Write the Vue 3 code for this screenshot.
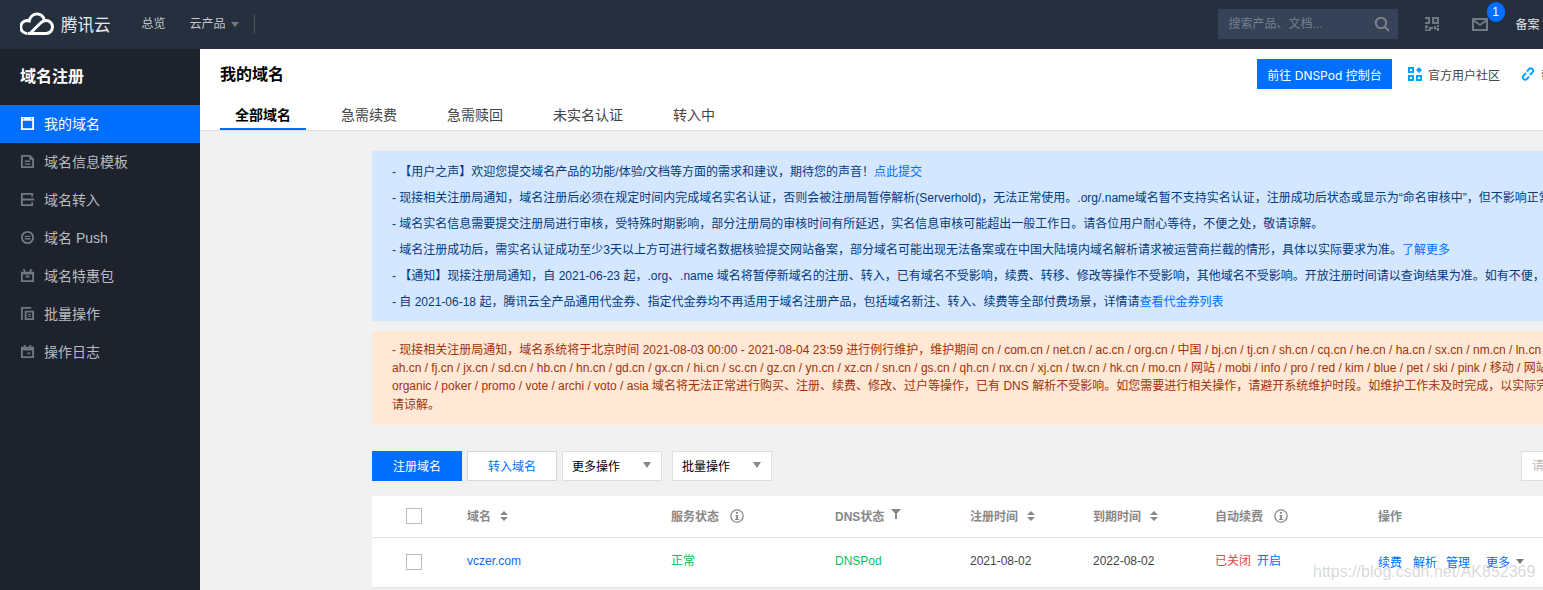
<script setup>
const menu = [
  { name: '我的域名', active: true, d: 'M1 1h14v14H1zM3 5v8h10V5zM3 2.500v1h1.500v-1zM11.500 2.500v1H13v-1z' },
  { name: '域名信息模板', d: 'M1 1h10l4 4v10H1zM3 3v10h10V6h-3V3zM5 7h6v1.500H5zM5 10h6v1.500H5z' },
  { name: '域名转入', d: 'M1 1h13v4h-2V3H3v4h12v2H3v4h9v-2h2v4H1z' },
  { name: '域名 Push', d: 'M8 1a7 7 0 1 0 0 14A7 7 0 0 0 8 1zM8 3a5 5 0 1 1 0 10A5 5 0 0 1 8 3zM5 6h6v1.500H5zM5 8.500h6V10H5z' },
  { name: '域名特惠包', d: 'M1 4h3L3 1h2l1 3h4l1-3h2l-1 3h3v11H1zM3 7v6h10V7zM6 8h4v2H6z' },
  { name: '批量操作', d: 'M1 1h11v2H3v12H1zM5 5h10v10H5zM7 7v6h6V7zM8.500 8.500h3v1h-3zM8.500 10.500h3v1h-3z' },
  { name: '操作日志', d: 'M4 1h2v2h4V1h2v2h3v12H1V3h3zM3 7v6h10V7zM8 9h3v2H8z' },
]

const tabs = ['全部域名', '急需续费', '急需赎回', '未实名认证', '转入中']

const orangeLines = [
  '- 现接相关注册局通知，域名系统将于北京时间 2021-08-03 00:00 - 2021-08-04 23:59 进行例行维护，维护期间 cn / com.cn / net.cn / ac.cn / org.cn / 中国 / bj.cn / tj.cn / sh.cn / cq.cn / he.cn / ha.cn / sx.cn / nm.cn / ln.cn /',
  'ah.cn / fj.cn / jx.cn / sd.cn / hb.cn / hn.cn / gd.cn / gx.cn / hi.cn / sc.cn / gz.cn / yn.cn / xz.cn / sn.cn / gs.cn / qh.cn / nx.cn / xj.cn / tw.cn / hk.cn / mo.cn / 网站 / mobi / info / pro / red / kim / blue / pet / ski / pink / 移动 / 网站',
  'organic / poker / promo / vote / archi / voto / asia 域名将无法正常进行购买、注册、续费、修改、过户等操作，已有 DNS 解析不受影响。如您需要进行相关操作，请避开系统维护时段。如维护工作未及时完成，以实际完成时间为准',
  '请谅解。',
]
</script>

<template>
  <div class="page">
    <header class="topbar">
      <svg class="logo" viewBox="0 0 34 24" width="34" height="24">
        <path d="M8 21.500h18a6.500 6.500 0 0 0 0-13c-3 0-4.500 1.500-6.500 3.500L10.500 21M7.500 21.500a6.500 6.500 0 0 1-.5-13c.8 0 1.500.1 2.200.4C10 5 13 2 17 2c3.600 0 6.500 2.500 7.500 6.500" fill="none" stroke="#fff" stroke-width="3" />
      </svg>
      <span class="brand">腾讯云</span>
      <span class="nav nav-first">总览</span>
      <span class="nav nav-second">云产品</span>
      <i class="caret"></i>
      <i class="divider"></i>
      <div class="search">
        <span>搜索产品、文档...</span>
        <svg viewBox="0 0 16 16" width="16" height="16">
          <circle cx="7" cy="7" r="5.200" fill="none" stroke="#7b8089" stroke-width="2" />
          <path d="M11 11l4 4" stroke="#7b8089" stroke-width="2" />
        </svg>
      </div>
      <svg class="qr" viewBox="0 0 16 16" width="16" height="16">
        <path d="M1 1h5v7H1V6h3V3H1zM8 1h7v7H8zM10 3v3h3V3zM11 4h1v1h-1zM1 9.500h3v2H3v1H1zM5 11h4v2H7v2H1v-1.500h4zM10 10h2v2h3v3h-2v-1.500h-3zM13 9h2v2h-2z" fill="#6f7883" fill-rule="evenodd" />
      </svg>
      <div class="mail">
        <svg viewBox="0 0 16 13" width="16" height="13">
          <path d="M0 0h16v13H0zM2 4v7h12V4L8 8zM3 2l5 4 5-4z" fill="#6f7883" fill-rule="evenodd" />
        </svg>
        <b class="badge">1</b>
      </div>
      <span class="record">备案</span>
    </header>

    <div class="body">
      <aside class="sidebar">
        <h2>域名注册</h2>
        <a v-for="item in menu" :key="item.name" class="menu-item" :class="{ active: item.active }">
          <svg viewBox="0 0 16 16" width="15" height="15">
            <path :d="item.d" fill="currentColor" fill-rule="evenodd" />
          </svg>
          <span>{{ item.name }}</span>
        </a>
      </aside>

      <main class="main">
        <section class="head">
          <div class="head-row">
            <h1>我的域名</h1>
            <button class="go-btn">前往 DNSPod 控制台</button>
            <svg class="head-icon" viewBox="0 0 14 14" width="14" height="14">
              <path d="M0 0h6v6H0zM2 2v2h2V2zM0 8h6v6H0zM2 10v2h2v-2zM8 8h6v6H8zM10 10v2h2v-2zM11 0l3 3-3 3-3-3z" fill="#00a4ff" fill-rule="evenodd" />
            </svg>
            <span class="head-link">官方用户社区</span>
            <svg class="head-icon chain" viewBox="0 0 14 14" width="14" height="14">
              <path d="M6 4.500l2-2.300a2.200 2.200 0 0 1 3.600 3L9 8M8 9.500l-2 2.300a2.200 2.200 0 0 1-3.600-3L5 6" fill="none" stroke="#00a4ff" stroke-width="2" />
            </svg>
            <span class="head-link">帮助</span>
          </div>
          <nav class="tabs">
            <span v-for="(tab, i) in tabs" :key="tab" class="tab" :class="{ current: i === 0 }">{{ tab }}</span>
          </nav>
        </section>

        <section class="content">
          <div class="notice blue">
            <p>- 【用户之声】欢迎您提交域名产品的功能/体验/文档等方面的需求和建议，期待您的声音！<a>点此提交</a></p>
            <p>- 现接相关注册局通知，域名注册后必须在规定时间内完成域名实名认证，否则会被注册局暂停解析(Serverhold)，无法正常使用。.org/.name域名暂不支持实名认证，注册成功后状态或显示为“命名审核中”，但不影响正常使用</p>
            <p>- 域名实名信息需要提交注册局进行审核，受特殊时期影响，部分注册局的审核时间有所延迟，实名信息审核可能超出一般工作日。请各位用户耐心等待，不便之处，敬请谅解。</p>
            <p>- 域名注册成功后，需实名认证成功至少3天以上方可进行域名数据核验提交网站备案，部分域名可能出现无法备案或在中国大陆境内域名解析请求被运营商拦截的情形，具体以实际要求为准。<a>了解更多</a></p>
            <p>- 【通知】现接注册局通知，自 2021-06-23 起，.org、.name 域名将暂停新域名的注册、转入，已有域名不受影响，续费、转移、修改等操作不受影响，其他域名不受影响。开放注册时间请以查询结果为准。如有不便，敬请谅解</p>
            <p>- 自 2021-06-18 起，腾讯云全产品通用代金券、指定代金券均不再适用于域名注册产品，包括域名新注、转入、续费等全部付费场景，详情请<a>查看代金券列表</a></p>
          </div>

          <div class="notice orange">
            <p v-for="line in orangeLines" :key="line">{{ line }}</p>
          </div>

          <div class="toolbar">
            <button class="btn primary">注册域名</button>
            <button class="btn plain">转入域名</button>
            <div class="select">更多操作<i></i></div>
            <div class="select">批量操作<i></i></div>
            <div class="find">请输入要搜索的域名</div>
          </div>

          <div class="table">
            <div class="row thead">
              <div class="cell check"><i class="box"></i></div>
              <div class="cell">域名<i class="sort"></i></div>
              <div class="cell">服务状态
                <svg class="tip" viewBox="0 0 14 14" width="14" height="14">
                  <circle cx="7" cy="7" r="6.200" fill="none" stroke="#888" stroke-width="1.300" />
                  <path d="M6 3h2v1.800H6zM5.500 6H8v4h1v1H5v-1h1.200V7h-.7z" fill="#888" />
                </svg>
              </div>
              <div class="cell">DNS状态
                <svg class="funnel" viewBox="0 0 10 10" width="10" height="10">
                  <path d="M0 0h10L6 4.500V10H4V4.500z" fill="#888" />
                </svg>
              </div>
              <div class="cell">注册时间<i class="sort"></i></div>
              <div class="cell">到期时间<i class="sort"></i></div>
              <div class="cell">自动续费
                <svg class="tip" viewBox="0 0 14 14" width="14" height="14">
                  <circle cx="7" cy="7" r="6.200" fill="none" stroke="#888" stroke-width="1.300" />
                  <path d="M6 3h2v1.800H6zM5.500 6H8v4h1v1H5v-1h1.200V7h-.7z" fill="#888" />
                </svg>
              </div>
              <div class="cell">操作</div>
            </div>
            <div class="row tbody">
              <div class="cell check"><i class="box"></i></div>
              <div class="cell"><a>vczer.com</a></div>
              <div class="cell green raised">正常</div>
              <div class="cell green">DNSPod</div>
              <div class="cell">2021-08-02</div>
              <div class="cell">2022-08-02</div>
              <div class="cell raised"><span class="red">已关闭</span><a class="open">开启</a></div>
              <div class="cell ops">
                <a>续费</a><a class="parse">解析</a><a class="manage">管理</a><a class="more">更多</a><i class="caret-sm"></i>
              </div>
            </div>
          </div>
        </section>
      </main>
    </div>
    <span class="watermark">https://blog.csdn.net/AK852369</span>
  </div>
</template>

<style>
html,
body {
  margin: 0;
  overflow: hidden;
}
</style>

<style scoped>
.page {
  position: relative;
  width: 1543px;
  height: 590px;
  overflow: hidden;
  display: flex;
  flex-direction: column;
  background: #f1f1f1;
  font-family: "Liberation Sans", "Noto Sans CJK SC", sans-serif;
  font-size: 12px;
  color: #333;
}

.topbar {
  flex: none;
  height: 49px;
  box-sizing: border-box;
  display: flex;
  align-items: center;
  padding: 0 0 1px 20px;
  background: #262f3e;
  color: #c1c6c8;
}

.logo {
  flex: none;
  margin-top: -1px;
}

.brand {
  margin-left: 7px;
  padding-bottom: 1px;
  font-size: 16.500px;
  color: #e8eaed;
}

.nav {
  padding-bottom: 3px;
}

.nav-first {
  margin-left: 31px;
}

.nav-second {
  margin-left: 24px;
}

.caret {
  margin-left: 5px;
  border: 4px solid transparent;
  border-top: 5px solid #777;
  border-bottom: 0;
}

.divider {
  margin-left: 15px;
  width: 1px;
  height: 20px;
  background: #4b5361;
}

.search {
  margin-left: 963px;
  flex: none;
  width: 180px;
  height: 30px;
  box-sizing: border-box;
  padding: 0 8px 0 11px;
  display: flex;
  align-items: center;
  justify-content: space-between;
  background: #354258;
  color: #777f8a;
}

.search span {
  padding-bottom: 3px;
}

.qr {
  margin-left: 26px;
  flex: none;
}

.mail {
  position: relative;
  margin-left: 32px;
  display: flex;
  flex: none;
}

.badge {
  position: absolute;
  left: 15px;
  top: -16px;
  width: 18px;
  height: 20px;
  border-radius: 9px;
  background: #006eff;
  color: #fff;
  font-weight: 400;
  text-align: center;
  line-height: 20px;
}

.record {
  margin-left: 28px;
  padding-bottom: 1px;
  flex: none;
  color: #e0e3e6;
}

.body {
  flex: 1;
  display: flex;
  min-height: 0;
}

.sidebar {
  flex: none;
  width: 200px;
  background: #1e222d;
}

.sidebar h2 {
  margin: 0;
  height: 56px;
  padding-left: 20px;
  line-height: 56px;
  font-size: 16px;
  font-weight: 700;
  color: #fff;
}

.menu-item {
  height: 38px;
  box-sizing: border-box;
  padding: 0 0 2px 20px;
  display: flex;
  align-items: center;
  gap: 9px;
  font-size: 14px;
  color: #b8bcc2;
}

.menu-item svg {
  color: #6f7883;
}

.menu-item.active {
  background: #006eff;
  color: #fff;
}

.menu-item.active svg {
  color: #fff;
}

.main {
  flex: 1;
  min-width: 0;
  overflow: hidden;
}

.head {
  height: 82px;
  box-sizing: border-box;
  padding: 10px 0 0 20px;
  background: #fff;
  border-bottom: 1px solid #ddd;
}

.head-row {
  height: 30px;
  display: flex;
  align-items: center;
  white-space: nowrap;
}

.head-row h1 {
  margin: 0;
  padding-bottom: 2px;
  width: 1037px;
  flex: none;
  font-size: 16px;
  font-weight: 700;
  color: #000;
}

.go-btn {
  flex: none;
  width: 135px;
  height: 30px;
  padding: 0;
  border: 0;
  background: #006eff;
  color: #fff;
  font: inherit;
  font-family: "Inter", "Noto Sans CJK SC", sans-serif;
}

.head-icon {
  margin-left: 16px;
  flex: none;
}

.head-icon.chain {
  margin-left: 21px;
}

.head-link {
  margin-left: 6px;
  flex: none;
  color: #444;
}

.tabs {
  margin-top: 11px;
  display: flex;
  gap: 20px;
}

.tab {
  height: 30px;
  padding: 0 15px;
  box-sizing: border-box;
  line-height: 30px;
  font-size: 14px;
  color: #444;
}

.tab.current {
  font-weight: 700;
  color: #000;
  border-bottom: 2px solid #006eff;
}

.content {
  width: 1400px;
  margin-left: 172px;
  padding-top: 20px;
}

.notice {
  padding-left: 20px;
  white-space: nowrap;
  overflow: hidden;
}

.notice p {
  margin: 0;
}

.notice a {
  color: #006eff;
}

.blue {
  padding-top: 8px;
  padding-bottom: 6px;
  background: #d5e7ff;
  color: #003b80;
  line-height: 26px;
}

.orange {
  margin-top: 10px;
  padding-top: 10px;
  padding-bottom: 11px;
  background: #ffe8d5;
  color: #a2330c;
  line-height: 18px;
}

.orange p:last-child {
  margin-top: 1px;
}

.toolbar {
  margin-top: 26px;
  display: flex;
  gap: 5px;
}

.btn {
  flex: none;
  width: 90px;
  height: 30px;
  padding: 0 0 2px;
  box-sizing: border-box;
  border: 1px solid #d3d9e3;
  font: inherit;
}

.btn.primary {
  background: #006eff;
  border-color: #006eff;
  color: #fff;
}

.btn.plain {
  background: #fff;
  color: #006eff;
}

.select {
  flex: none;
  width: 100px;
  height: 30px;
  box-sizing: border-box;
  padding: 0 10px 2px 9px;
  display: flex;
  align-items: center;
  justify-content: space-between;
  background: #fff;
  border: 1px solid #dcdfe6;
  color: #000;
}

.select + .select {
  margin-left: 5px;
}

.select i {
  border: 4px solid transparent;
  border-top: 6px solid #888;
  border-bottom: 0;
}

.find {
  margin-left: auto;
  width: 251px;
  height: 30px;
  box-sizing: border-box;
  padding-left: 10px;
  line-height: 28px;
  background: #fff;
  border: 1px solid #dcdfe6;
  color: #bbb;
}

.table {
  margin-top: 15px;
  background: #fff;
}

.row {
  display: grid;
  grid-template-columns: 95px 204px 164px 135px 123px 122px 163px 1fr;
  align-items: center;
  box-sizing: border-box;
  border-bottom: 1px solid #e2e2e2;
}

.thead {
  height: 42px;
  padding-bottom: 2px;
  color: #888;
  font-weight: 700;
}

.tbody {
  height: 50px;
  padding-bottom: 4px;
  color: #444;
}

.tbody .box {
  margin-top: 3px;
}

.cell {
  display: flex;
  align-items: center;
  white-space: nowrap;
}

.cell.raised {
  padding-bottom: 3px;
}

.cell.ops {
  padding-top: 2px;
}

.check {
  padding-left: 34px;
}

.box {
  width: 16px;
  height: 16px;
  box-sizing: border-box;
  border: 1px solid #bbb;
  background: #fff;
}

.sort {
  position: relative;
  margin-left: 9px;
  width: 8px;
  height: 10px;
}

.sort::before,
.sort::after {
  content: "";
  position: absolute;
  left: 0;
  border: 4px solid transparent;
}

.sort::before {
  top: 0;
  border-top: 0;
  border-bottom: 4px solid #888;
}

.sort::after {
  bottom: 0;
  border-bottom: 0;
  border-top: 4px solid #888;
}

.tip {
  margin-left: 11px;
}

.funnel {
  margin-left: 7px;
  margin-top: -4px;
}

.cell a {
  color: #006eff;
}

.green {
  color: #0abf5b;
}

.red {
  color: #e54545;
}

.open {
  margin-left: 6px;
}

.ops .parse {
  margin: 0 9px 0 11px;
}

.ops .more {
  margin: 0 6px 0 16px;
}

.caret-sm {
  border: 4px solid transparent;
  border-top: 5px solid #777;
  border-bottom: 0;
}

.watermark {
  position: absolute;
  left: 1313px;
  top: 563px;
  font-size: 16px;
  line-height: 18px;
  color: rgba(170, 170, 170, 0.45);
  white-space: nowrap;
  pointer-events: none;
}
</style>
